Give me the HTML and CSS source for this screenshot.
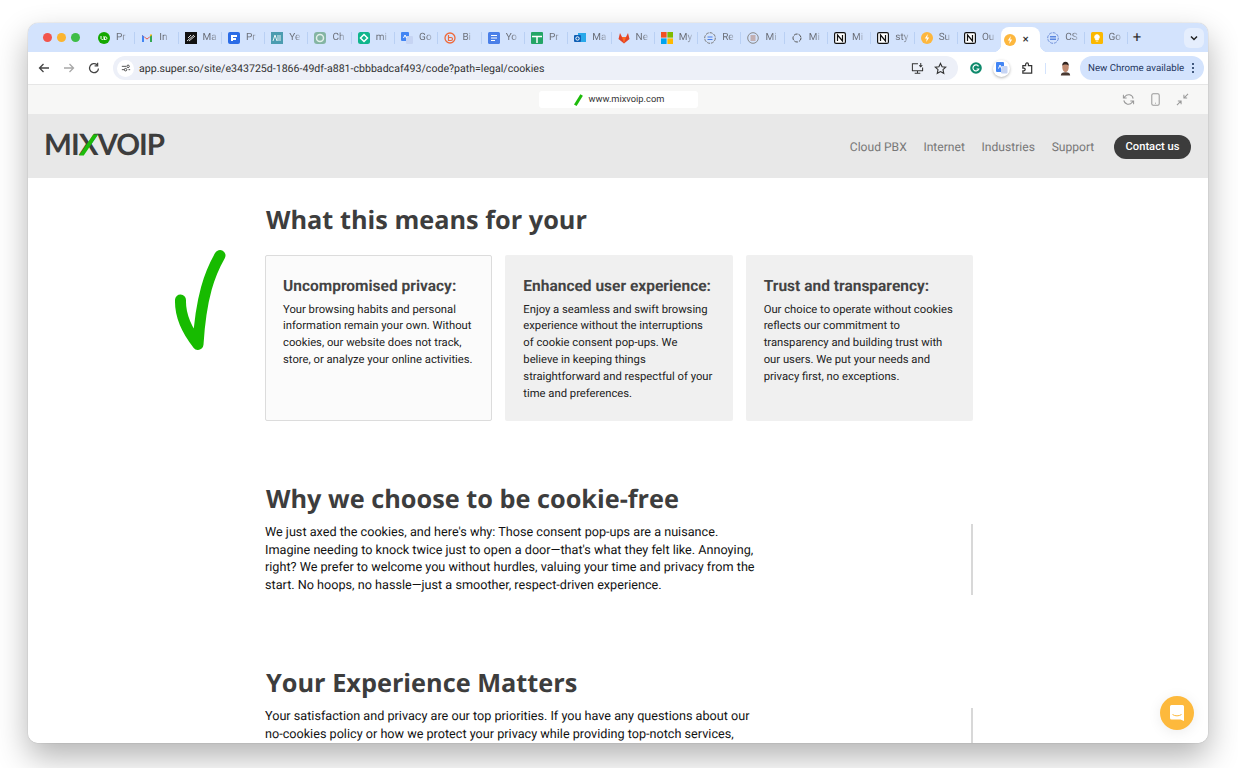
FILE: index.html
```html
<!DOCTYPE html>
<html lang="en">
<head>
<meta charset="utf-8">
<title>Mixvoip cookies</title>
<link rel="stylesheet" href="styles.css">
</head>
<body>
<div class="window">
  <div class="tabstrip">
    <div class="lights"><i class="light red"></i><i class="light yellow"></i><i class="light green"></i></div>
    <div class="tabs">
      <div class="tab"><svg viewBox="0 0 12 12"><circle cx="6" cy="6" r="6" fill="#14a800"/><path d="M3 4v2.500a1.600 1.600 0 0 0 3 0V4M6.500 8V5.500a1.300 1.300 0 1 1 1 2H6.500" fill="none" stroke="#fff"/></svg><span>Pr</span></div>
      <div class="tab"><svg viewBox="0 0 12 12"><path d="M1 3v7h2V5l3 2.500L9 5v5h2V3L6 6.500z" fill="#ea4335"/><path d="M1 10V3l2 1.500V10z" fill="#4285f4"/><path d="M9 10V4.500L11 3v7z" fill="#34a853"/><path d="M9 4.500 11 3 10 2 9 3z" fill="#fbbc04"/></svg><span>In</span></div>
      <div class="tab"><svg viewBox="0 0 12 12"><rect width="12" height="12" fill="#111"/><path d="M2 9 9 3M4 9l6-5M3 6l3-3" stroke="#ddd"/></svg><span>Ma</span></div>
      <div class="tab"><svg viewBox="0 0 12 12"><rect width="12" height="12" rx="2" fill="#2b6ce6"/><path d="M3 3h6v2H5v1h3v2H5v1H3z" fill="#fff"/></svg><span>Pr</span></div>
      <div class="tab"><svg viewBox="0 0 12 12"><rect width="12" height="12" fill="#4b9cb0"/><path d="M2 9l2-6 2 6M7 3v6M9 3v6" stroke="#e8f4f6" fill="none"/></svg><span>Ye</span></div>
      <div class="tab"><svg viewBox="0 0 12 12"><rect width="12" height="12" rx="3" fill="#84b5a3"/><circle cx="6" cy="6" r="3.500" fill="none" stroke="#e3f0ea" stroke-width="1.500"/></svg><span>Ch</span></div>
      <div class="tab"><svg viewBox="0 0 12 12"><rect width="12" height="12" rx="2.500" fill="#10b58c"/><path d="M6 2.500 9.500 6 6 9.500 2.500 6z" fill="none" stroke="#fff" stroke-width="1.500"/></svg><span>mi</span></div>
      <div class="tab"><svg viewBox="0 0 12 12"><rect width="8" height="9" rx="1" fill="#4285f4"/><rect x="5" y="4" width="7" height="8" rx="1" fill="#c6d4f3"/><path d="M2.500 6 4 3l1.500 3" fill="none" stroke="#fff"/></svg><span>Go</span></div>
      <div class="tab"><svg viewBox="0 0 12 12"><circle cx="6" cy="6" r="5" fill="none" stroke="#ee6a3c" stroke-width="1.300"/><path d="M4.500 3v5.500H7a1.500 1.500 0 0 0 0-3H4.500" fill="none" stroke="#ee6a3c" stroke-width="1.200"/></svg><span>Bi</span></div>
      <div class="tab"><svg viewBox="0 0 12 12"><rect width="12" height="12" rx="1.500" fill="#4a7fe8"/><path d="M3 3.500h6M3 6h6M3 8.500h4" stroke="#fff"/></svg><span>Yo</span></div>
      <div class="tab"><svg viewBox="0 0 12 12"><rect width="12" height="12" rx="1" fill="#23a566"/><path d="M1 4.500h10M6 4.500V11" stroke="#fff" stroke-width="1.500"/></svg><span>Pr</span></div>
      <div class="tab"><svg viewBox="0 0 12 12"><rect x="4" y="1" width="8" height="9" fill="#28a8ea"/><rect y="3" width="7" height="7" rx="1" fill="#0f5fb5"/><circle cx="3.500" cy="6.500" r="1.700" fill="none" stroke="#fff"/></svg><span>Ma</span></div>
      <div class="tab"><svg viewBox="0 0 12 12"><path d="M6 11.500.5 7 2 1l2 4h4l2-4 1.500 6z" fill="#e24329"/><path d="M6 11.500 4 5h4z" fill="#fc6d26"/></svg><span>Ne</span></div>
      <div class="tab"><svg viewBox="0 0 12 12"><rect width="5.600" height="5.600" fill="#f25022"/><rect x="6.400" width="5.600" height="5.600" fill="#7fba00"/><rect y="6.400" width="5.600" height="5.600" fill="#00a4ef"/><rect x="6.400" y="6.400" width="5.600" height="5.600" fill="#ffb900"/></svg><span>My</span></div>
      <div class="tab"><svg viewBox="0 0 12 12"><circle cx="6" cy="6" r="5.300" fill="none" stroke="#777" stroke-dasharray="3 1"/><path d="M3.500 5h5M3.500 7.500h5" stroke="#4a7fe8"/></svg><span>Re</span></div>
      <div class="tab"><svg viewBox="0 0 12 12"><circle cx="6" cy="6" r="5.300" fill="none" stroke="#888"/><path d="M3.500 4h5M3.500 6h5M3.500 8h5" stroke="#b07a66"/></svg><span>Mi</span></div>
      <div class="tab"><svg viewBox="0 0 12 12"><circle cx="6" cy="6" r="4" fill="none" stroke="#555" stroke-dasharray="4 1"/></svg><span>Mi</span></div>
      <div class="tab"><svg viewBox="0 0 12 12"><rect x=".6" y=".6" width="10.800" height="10.800" rx="1.500" fill="#fff" stroke="#111" stroke-width="1.200"/><path d="M3.500 9V3l5 6V3" fill="none" stroke="#111" stroke-width="1.200"/></svg><span>Mi</span></div>
      <div class="tab"><svg viewBox="0 0 12 12"><rect x=".6" y=".6" width="10.800" height="10.800" rx="1.500" fill="#fff" stroke="#111" stroke-width="1.200"/><path d="M3.500 9V3l5 6V3" fill="none" stroke="#111" stroke-width="1.200"/></svg><span>sty</span></div>
      <div class="tab"><svg viewBox="0 0 12 12"><circle cx="6" cy="6" r="6" fill="#fdb73e"/><path d="M6.800 2 3.800 6.500h2L5.200 10l3-4.500h-2z" fill="#fff"/></svg><span>Su</span></div>
      <div class="tab tab-last"><svg viewBox="0 0 12 12"><rect x=".6" y=".6" width="10.800" height="10.800" rx="1.500" fill="#fff" stroke="#111" stroke-width="1.200"/><path d="M3.500 9V3l5 6V3" fill="none" stroke="#111" stroke-width="1.200"/></svg><span>Ou</span></div>
      <div class="tab tab-active"><svg viewBox="0 0 12 12"><circle cx="6" cy="6" r="6" fill="#fdb73e"/><path d="M6.800 2 3.800 6.500h2L5.200 10l3-4.500h-2z" fill="#fff"/></svg><b class="tab-close">✕</b></div>
      <div class="tab"><svg viewBox="0 0 12 12"><circle cx="6" cy="6" r="5.300" fill="none" stroke="#6f8fd8" stroke-dasharray="3 1"/><path d="M3 4.500h6M3 6h6M3 7.500h6" stroke="#5a86e0"/></svg><span>CS</span></div>
      <div class="tab"><svg viewBox="0 0 12 12"><rect width="12" height="12" rx="1.500" fill="#fbb800"/><path d="M6 2.500a2.500 2.500 0 0 1 1.500 4.500v1h-3V7A2.500 2.500 0 0 1 6 2.500zM4.800 9.300h2.400" fill="#fff" stroke="#fff" stroke-width=".6"/></svg><span>Go</span></div>
      <div class="newtab">+</div>
    </div>
    <div class="tabmenu"><svg viewBox="0 0 10 10"><path d="M2 3.500 5 6.500 8 3.500" fill="none" stroke="#222" stroke-width="1.500"/></svg></div>
  </div>

  <div class="toolbar">
    <div class="navicons">
      <svg viewBox="0 0 12 12"><path d="M11 6H1.500M5.500 2 1.500 6l4 4" fill="none" stroke="#444" stroke-width="1.300"/></svg>
      <svg viewBox="0 0 12 12"><path d="M1 6h9.500M6.500 2l4 4-4 4" fill="none" stroke="#a8a8a8" stroke-width="1.300"/></svg>
      <svg viewBox="0 0 12 12"><path d="M10.500 6.500A4.500 4.500 0 1 1 9 2.800M9.600 .8v3H6.600" fill="none" stroke="#444" stroke-width="1.300"/></svg>
    </div>
    <div class="omnibox">
      <div class="site-info"><svg viewBox="0 0 12 12"><path d="M1 4h5M9 8h2M1 8h3" stroke="#333"/><circle cx="8.500" cy="4" r="1.500" fill="none" stroke="#333"/><circle cx="5.500" cy="8" r="1.500" fill="none" stroke="#333"/></svg></div>
      <span class="url">app.super.so/site/e343725d-1866-49df-a881-cbbbadcaf493/code?path=legal/cookies</span>
      <div class="omni-actions">
        <svg viewBox="0 0 14 14"><path d="M7.500 2H1.500v7.500h11V6M4 12h6M7 9.500V12M10.500 1v4M8.800 3.500l1.700 1.700 1.700-1.700" fill="none" stroke="#333" stroke-width="1.100"/></svg>
        <svg viewBox="0 0 14 14"><path d="m7 1.500 1.700 3.600 3.900.5-2.900 2.700.8 3.900L7 10.300l-3.500 1.900.8-3.900L1.400 5.600l3.900-.5z" fill="none" stroke="#333" stroke-width="1.200"/></svg>
      </div>
    </div>
    <div class="extensions">
      <svg class="ext-g" viewBox="0 0 12 12"><circle cx="6" cy="6" r="5.800" fill="#0f8a6c"/><path d="M8.500 4.300A3 3 0 1 0 8.800 7H6.500" fill="none" stroke="#fff" stroke-width="1.200"/></svg>
      <div class="ext-translate"><svg viewBox="0 0 12 12"><rect width="8" height="10" rx="1" fill="#4285f4"/><rect x="5" y="4" width="6.500" height="7.500" rx="1" fill="#c6d4f3"/><path d="M2.500 6.500 4 3l1.500 3.500" fill="none" stroke="#fff"/></svg></div>
      <svg class="ext-puzzle" viewBox="0 0 14 14"><path d="M2 4h3V2.500a1.500 1.500 0 0 1 3 0V4h3.500v8H2V9.500h1a1.500 1.500 0 0 0 0-3H2z" fill="none" stroke="#333" stroke-width="1.300"/></svg>
      <i class="ext-sep"></i>
      <svg class="avatar" viewBox="0 0 14 16"><path d="M2 16c0-2.500 1.500-3.500 5-3.500s5 1 5 3.500z" fill="#4a3a32"/><ellipse cx="7" cy="7" rx="3.500" ry="5.500" fill="#c08a70"/><path d="M3.500 5.500C3 0 11 0 10.500 5.500 9 3.800 5 3.800 3.500 5.500z" fill="#2e2420"/></svg>
    </div>
    <div class="update-pill"><span>New Chrome available</span><svg viewBox="0 0 4 12"><circle cx="2" cy="2" r="1.100" fill="#1f3760"/><circle cx="2" cy="6" r="1.100" fill="#1f3760"/><circle cx="2" cy="10" r="1.100" fill="#1f3760"/></svg></div>
  </div>

  <div class="devicebar">
    <div class="address-chip"><i class="chip-mark"></i><span>www.mixvoip.com</span></div>
    <div class="device-actions">
      <svg viewBox="0 0 14 14"><path d="M12 6a5 5 0 0 0-9-2L1.500 5.500M2 8a5 5 0 0 0 9 2l1.500-1.500M1.500 2v3.500H5M12.500 12V8.500H9" fill="none" stroke="#999" stroke-width="1.100"/></svg>
      <svg viewBox="0 0 14 14"><rect x="3" y=".8" width="8" height="12.400" rx="1.500" fill="none" stroke="#999" stroke-width="1.100"/><path d="M6.500 11h1" stroke="#999"/></svg>
      <svg viewBox="0 0 14 14"><path d="M13 1 8.500 5.500M8.500 2v3.500H12M1 13l4.500-4.500M2 8.500h3.500V12" fill="none" stroke="#999" stroke-width="1.100"/></svg>
    </div>
  </div>

  <div class="viewport">
    <header class="sitenav">
      <div class="logo">MI<span class="logo-x">X<svg viewBox="0 0 20 22"><path d="M15 0h5L5 22H0z" fill="#1dbb0a"/></svg></span>VOIP</div>
      <nav class="navlinks">
        <a>Cloud PBX</a><a>Internet</a><a>Industries</a><a>Support</a>
        <a class="contact">Contact us</a>
      </nav>
    </header>

    <main class="content">
      <h2 class="h-first">What this means for your</h2>
      <div class="cards">
        <article class="card card-outlined">
          <h3>Uncompromised privacy:</h3>
          <p>Your browsing habits and personal information remain your own. Without cookies, our website does not track, store, or analyze your online activities.</p>
        </article>
        <article class="card">
          <h3>Enhanced user experience:</h3>
          <p>Enjoy a seamless and swift browsing experience without the interruptions of cookie consent pop-ups. We believe in keeping things straightforward and respectful of your time and preferences.</p>
        </article>
        <article class="card">
          <h3>Trust and transparency:</h3>
          <p>Our choice to operate without cookies reflects our commitment to transparency and building trust with our users. We put your needs and privacy first, no exceptions.</p>
        </article>
      </div>

      <h2 class="h-why">Why we choose to be cookie-free</h2>
      <div class="textrow">
        <p>We just axed the cookies, and here's why: Those consent pop-ups are a nuisance. Imagine needing to knock twice just to open a door—that's what they felt like. Annoying, right? We prefer to welcome you without hurdles, valuing your time and privacy from the start. No hoops, no hassle—just a smoother, respect-driven experience.</p>
      </div>

      <h2 class="h-exp">Your Experience Matters</h2>
      <div class="textrow">
        <p>Your satisfaction and privacy are our top priorities. If you have any questions about our no-cookies policy or how we protect your privacy while providing top-notch services,</p>
      </div>
    </main>

    <svg class="checkmark" viewBox="0 0 60 110"><path d="M50 7.500C40 25 31 48 28 96.500 18 84 10 68 10.500 52" fill="none" stroke="#17bb00" stroke-width="11" stroke-linecap="round" stroke-linejoin="round"/></svg>
    <div class="chat"><svg viewBox="0 0 16 18"><path d="M2.500 1h11A1.500 1.500 0 0 1 15 2.500V17l-3.500-1.500h-9A1.500 1.500 0 0 1 1 14V2.500A1.500 1.500 0 0 1 2.500 1z" fill="#fff"/><path d="M3.500 10.500c2.500 1.800 6.500 1.800 9 0" fill="none" stroke="#fdb93c"/></svg></div>
  </div>
</div>
</body>
</html>
```

FILE: styles.css
```css
* { box-sizing: border-box; }
html, body { margin: 0; height: 100%; overflow: hidden; background: #fff; }
body { font-family: Roboto, "Liberation Sans", sans-serif; color: #111; text-rendering: geometricPrecision; }

.window {
  width: 1180px;
  height: 720px;
  margin: 23px 0 0 28px;
  border-radius: 10px;
  overflow: hidden;
  display: flex;
  flex-direction: column;
  background: #fff;
  box-shadow: 0 14px 32px rgba(0, 0, 0, .3), 0 0 1px rgba(0, 0, 0, .4);
}

/* Tab strip */
.tabstrip { height: 29px; flex: none; display: flex; align-items: center; background: #d3e3fd; }
.lights { width: 64px; flex: none; display: flex; gap: 5px; padding-left: 15px; }
.light { width: 9px; height: 9px; border-radius: 50%; }
.red { background: #f2554c; }
.yellow { background: #fbb530; }
.green { background: #3ebd47; }
.tabs { display: flex; align-items: center; height: 100%; flex: 1; }
.tab {
  width: 43.300px;
  height: 12px;
  flex: none;
  display: flex;
  align-items: center;
  gap: 6px;
  padding-left: 6px;
  border-right: 1px solid #b9d0f4;
  font-size: 10px;
  color: #6b6f78;
}
.tab svg { width: 12px; height: 12px; flex: none; }
.tab span {
  -webkit-mask-image: linear-gradient(90deg, #000 55%, rgba(0, 0, 0, .3));
  mask-image: linear-gradient(90deg, #000 55%, rgba(0, 0, 0, .3));
}
.tab-last { border-right: 0; }
.tab-active {
  position: relative;
  height: 25px;
  align-self: flex-end;
  width: 39px;
  margin: 0 1px 0 0;
  padding-left: 3px;
  border: 0;
  border-radius: 8px 8px 0 0;
  background: #fff;
  gap: 6px;
}
.tab-active::before,
.tab-active::after {
  content: "";
  position: absolute;
  bottom: 0;
  width: 8px;
  height: 8px;
}
.tab-active::before { left: -8px; background: radial-gradient(circle at 0 0, transparent 8px, #fff 8.500px); }
.tab-active::after { right: -8px; background: radial-gradient(circle at 100% 0, transparent 8px, #fff 8.500px); }
.tab-close { font-size: 8px; color: #333; font-weight: 700; }
.newtab { width: 30px; padding-left: 5px; font-size: 15px; color: #333; line-height: 1; }
.tabmenu {
  width: 20px;
  height: 20px;
  margin-right: 4px;
  flex: none;
  display: flex;
  align-items: center;
  justify-content: center;
  border-radius: 6px;
  background: #e5eefd;
}
.tabmenu svg { width: 10px; height: 10px; }

/* Toolbar */
.toolbar { height: 32px; flex: none; display: flex; align-items: center; background: #fff; }
.navicons { width: 85px; flex: none; display: flex; gap: 13px; padding-left: 10px; }
.navicons svg { width: 12px; height: 12px; }
.omnibox {
  width: 845px;
  height: 24px;
  flex: none;
  display: flex;
  align-items: center;
  border-radius: 12px;
  background: #edf0f8;
  padding: 0 11px 0 4px;
}
.site-info {
  width: 17px;
  height: 17px;
  flex: none;
  display: flex;
  align-items: center;
  justify-content: center;
  border-radius: 50%;
  background: #fff;
}
.site-info svg { width: 10px; height: 10px; }
.url { margin-left: 5px; flex: 1; font-size: 10.600px; color: #333; white-space: nowrap; }
.omni-actions { display: flex; gap: 10px; }
.omni-actions svg { width: 13px; height: 13px; }
.extensions { width: 122px; flex: none; display: flex; align-items: center; padding-left: 12px; }
.ext-g { width: 12px; height: 12px; }
.ext-translate {
  width: 17px;
  height: 17px;
  margin-left: 11px;
  display: flex;
  align-items: center;
  justify-content: center;
  border-radius: 50%;
  background: #fff;
  box-shadow: 0 1px 3px rgba(0, 0, 0, .3);
}
.ext-translate svg { width: 12px; height: 12px; }
.ext-puzzle { width: 13px; height: 13px; margin-left: 11px; }
.ext-sep { width: 1px; height: 11px; margin-left: 11px; background: #d3e3fd; }
.avatar { width: 13px; height: 16px; margin-left: 13px; }
.update-pill {
  width: 124px;
  height: 24px;
  flex: none;
  display: flex;
  align-items: center;
  justify-content: space-between;
  padding: 0 9px 0 8px;
  border-radius: 12px;
  background: #d3e3fd;
  color: #1f3760;
  font-size: 9.700px;
  white-space: nowrap;
}
.update-pill svg { width: 4px; height: 12px; }

/* Builder bar */
.devicebar {
  height: 30px;
  flex: none;
  display: flex;
  align-items: center;
  background: #f7f7f6;
  border-top: 1px solid #e6e6e6;
  padding-left: 511px;
}
.address-chip {
  width: 159px;
  height: 17px;
  display: flex;
  align-items: center;
  padding-left: 38px;
  gap: 9px;
  border-radius: 3px;
  background: #fff;
  font-size: 9.300px;
  color: #333;
}
.chip-mark { width: 2.500px; height: 12px; background: #1dbb0a; transform: rotate(32deg); }
.device-actions { margin-left: auto; margin-right: 19px; display: flex; gap: 14px; }
.device-actions svg { width: 13px; height: 13px; }

/* Site */
.viewport { flex: 1; min-height: 0; position: relative; overflow: hidden; background: #fff; }
.sitenav {
  height: 64px;
  display: flex;
  align-items: center;
  justify-content: space-between;
  padding: 0 17px 0 16px;
  background: #e8e8e8;
}
.logo {
  font-family: Lato, "Open Sans", sans-serif;
  font-weight: 700;
  font-size: 29.500px;
  letter-spacing: -1px;
  line-height: 1;
  color: #3d3d3d;
  margin-top: -2px;
}
.logo-x { position: relative; display: inline-block; }
.logo-x svg { position: absolute; left: 0; top: 4px; width: 19px; height: 22px; }
.navlinks { display: flex; align-items: center; gap: 16.700px; font-size: 12.100px; color: #777; margin-top: 1px; }
.navlinks .contact {
  width: 77px;
  height: 24px;
  margin-left: 3px;
  display: flex;
  align-items: center;
  justify-content: center;
  border-radius: 12px;
  background: #3c3c3c;
  color: #fff;
  font-weight: 500;
  font-size: 11.200px;
}
.content { padding-left: 237px; }
h2 {
  margin: 0;
  font-family: "Open Sans", sans-serif;
  font-weight: 700;
  font-size: 25.300px;
  line-height: 36px;
  color: #3d3d3d;
  padding-left: 1px;
}
.h-first { margin-top: 24px; }
.cards { margin-top: 17px; display: flex; gap: 13px; width: 708px; }
.card {
  flex: 1;
  height: 166px;
  padding: 21px 18px 0;
  border-radius: 2px;
  background: #f0f0f0;
}
.card-outlined { background: #fbfbfb; border: 1px solid #dcdcdc; padding: 20px 17px 0; }
.card h3 { margin: 0 0 5.500px; font-size: 15.500px; font-weight: 700; line-height: 20px; color: #444; white-space: nowrap; }
.card p { margin: 0; font-size: 11.250px; line-height: 16.900px; color: #222; }
.h-why { margin-top: 60px; }
.textrow { width: 708px; border-right: 2px solid #d8d8d8; margin-top: 7px; padding-right: 215px; }
.textrow p { margin: 0; font-size: 12.650px; line-height: 17.700px; color: #111; }
.h-exp { margin-top: 70px; }

.checkmark { position: absolute; left: 142px; top: 134px; width: 60px; height: 110px; }
.chat {
  position: absolute;
  left: 1132px;
  top: 582px;
  width: 34px;
  height: 34px;
  display: flex;
  align-items: center;
  justify-content: center;
  border-radius: 50%;
  background: #fdb93c;
  box-shadow: 0 2px 14px rgba(0, 0, 0, .08);
}
.chat svg { width: 16px; height: 18px; }
```
